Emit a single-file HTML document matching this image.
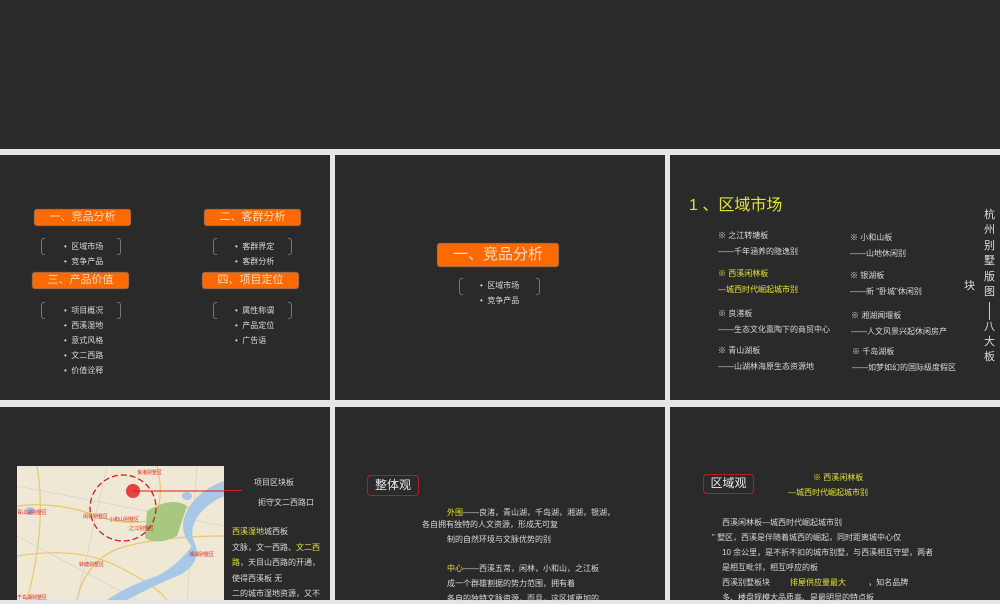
<!DOCTYPE html>
<html><head><meta charset="utf-8">
<style>
*{margin:0;padding:0;box-sizing:border-box}
body{width:1000px;height:600px;background:#e6e6e6;position:relative;overflow:hidden;font-family:"Liberation Sans","Noto Sans CJK SC",sans-serif}
.s{position:absolute;background:#2a2a2a}
.t{position:absolute;white-space:nowrap;font-size:8px;line-height:10px;color:#d8d8d8}
.y{color:#e2e234}
.ob{position:absolute;background:#ff6a00;border:1px solid #a86a40;border-radius:3px;color:#f6dcc4;text-align:center;box-shadow:0 0 1px #805030}
.br{position:absolute;width:4px;border:1px solid #777;}
.bl{border-right:none;border-radius:3px 0 0 3px}
.brr{border-left:none;border-radius:0 3px 3px 0}
.rb{position:absolute;border:1.5px solid #b02020;border-radius:4px;color:#e8e8e8;font-size:12px;text-align:center}
</style></head><body>
<div class="s" style="left:0;top:0;width:1000px;height:149px;background:#2b2b2b"></div>
<div class="s" style="left:0;top:155px;width:330px;height:245px"></div>
<div class="s" style="left:335px;top:155px;width:330px;height:245px"></div>
<div class="s" style="left:670px;top:155px;width:330px;height:245px"></div>
<div class="s" style="left:0;top:407px;width:330px;height:193px"></div>
<div class="s" style="left:335px;top:407px;width:330px;height:193px"></div>
<div class="s" style="left:670px;top:407px;width:330px;height:193px"></div>

<!-- slide 1 -->
<div class="ob" style="left:34px;top:209px;width:97px;height:17px;font-size:11px;line-height:15px">一、竞品分析</div>
<div class="ob" style="left:204px;top:209px;width:97px;height:17px;font-size:11px;line-height:15px">二、客群分析</div>
<div class="ob" style="left:32px;top:272px;width:97px;height:17px;font-size:11px;line-height:15px">三、产品价值</div>
<div class="ob" style="left:202px;top:272px;width:97px;height:17px;font-size:11px;line-height:15px">四、项目定位</div>
<div class="br bl" style="left:41px;top:238px;height:17px"></div><div class="br brr" style="left:117px;top:238px;height:17px"></div>
<div class="br bl" style="left:213px;top:238px;height:17px"></div><div class="br brr" style="left:288px;top:238px;height:17px"></div>
<div class="br bl" style="left:41px;top:302px;height:17px"></div><div class="br brr" style="left:117px;top:302px;height:17px"></div>
<div class="br bl" style="left:213px;top:302px;height:17px"></div><div class="br brr" style="left:288px;top:302px;height:17px"></div>
<div class="t" style="left:64px;top:239px;line-height:15px">•&nbsp; 区域市场<br>•&nbsp; 竞争产品</div>
<div class="t" style="left:235px;top:239px;line-height:15px">•&nbsp; 客群界定<br>•&nbsp; 客群分析</div>
<div class="t" style="left:64px;top:303px;line-height:15px">•&nbsp; 项目概况<br>•&nbsp; 西溪湿地<br>•&nbsp; 意式风格<br>•&nbsp; 文二西路<br>•&nbsp; 价值诠释</div>
<div class="t" style="left:235px;top:303px;line-height:15px">•&nbsp; 属性称谓<br>•&nbsp; 产品定位<br>•&nbsp; 广告语</div>

<!-- slide 2 -->
<div class="ob" style="left:437px;top:243px;width:122px;height:24px;font-size:15px;line-height:22px">一、竞品分析</div>
<div class="br bl" style="left:459px;top:278px;height:17px"></div><div class="br brr" style="left:536px;top:278px;height:17px"></div>
<div class="t" style="left:480px;top:278px;line-height:15px">•&nbsp; 区域市场<br>•&nbsp; 竞争产品</div>

<!-- slide 3 -->
<div class="t y" style="left:689px;top:196px;font-size:16px;line-height:20px">1 、区域市场</div>
<div class="t" style="left:718px;top:228px;line-height:16px">※ 之江转塘板<br>——千年涵养的隐逸别</div>
<div class="t y" style="left:718px;top:266px;line-height:16px">※ 西溪闲林板<br>—城西时代崛起城市别</div>
<div class="t" style="left:718px;top:306px;line-height:16px">※ 良渚板<br>——生态文化熏陶下的商贸中心</div>
<div class="t" style="left:718px;top:343px;line-height:16px">※ 青山湖板<br>——山湖林海原生态资源地</div>
<div class="t" style="left:850px;top:230px;line-height:16px">※ 小和山板<br>——山地休闲别</div>
<div class="t" style="left:850px;top:268px;line-height:16px">※ 银湖板<br>——新 "卧城"休闲别</div>
<div class="t" style="left:851px;top:308px;line-height:16px">※ 湘湖闻堰板<br>——人文风景兴起休闲房产</div>
<div class="t" style="left:852px;top:344px;line-height:16px">※ 千岛湖板<br>——如梦如幻的国际级度假区</div>
<div class="t" style="left:964px;top:279px;font-size:11px;line-height:14px;color:#ddd">块</div>
<div class="t" style="left:984px;top:208px;font-size:11px;line-height:15.4px;color:#ddd;white-space:normal;width:12px">杭州别墅版图</div>
<div style="position:absolute;left:989px;top:302px;width:1px;height:18px;background:#ccc"></div>
<div class="t" style="left:984px;top:320px;font-size:11px;line-height:15px;color:#ddd;white-space:normal;width:12px">八大板</div>

<!-- slide 4 map -->
<svg style="position:absolute;left:17px;top:466px" width="207" height="134" viewBox="0 0 207 134">
<rect width="207" height="134" fill="#efe8d4"/>
<g stroke="#e8c870" stroke-width="1.2" fill="none">
<path d="M0 40 Q40 35 80 50 T160 45 L207 30"/><path d="M20 0 Q30 60 10 134"/><path d="M60 134 Q70 90 110 80 T207 70"/><path d="M0 90 Q60 80 100 100 T150 134"/><path d="M140 0 Q150 40 130 60"/>
</g>
<g stroke="#ccc" stroke-width=".6" fill="none"><path d="M0 20 L207 60"/><path d="M0 70 L120 134"/><path d="M90 0 L60 134"/><path d="M180 0 L170 134"/></g>
<path d="M130 45 Q155 30 170 40 L160 70 Q140 80 128 72 Z" fill="#a8c880"/>
<path d="M207 15 Q180 25 170 45 Q160 65 175 80 Q160 100 140 110 Q110 120 90 134 L110 134 Q140 118 165 108 Q185 95 178 78 Q170 62 185 45 Q195 35 207 30Z" fill="#a8c8e8"/>
<ellipse cx="170" cy="30" rx="5" ry="4" fill="#a8c8e8"/><ellipse cx="13" cy="45" rx="5" ry="4" fill="#a8c8e8"/>
<circle cx="106" cy="42" r="33" fill="none" stroke="#d02020" stroke-width="1.3" stroke-dasharray="6 3"/>
<circle cx="116" cy="25" r="7" fill="#e84040"/>
<line x1="116" y1="25" x2="207" y2="25" stroke="#d02020" stroke-width="1"/>
<g fill="#e02020" font-size="5" font-family="Liberation Sans,Noto Sans CJK SC,sans-serif">
<text x="120" y="8">良渚别墅区</text><text x="0" y="48">青山湖别墅区</text><text x="66" y="52">闲林别墅区</text><text x="92" y="55">小和山别墅区</text><text x="112" y="64">之江别墅区</text><text x="172" y="90">湘湖别墅区</text><text x="62" y="100">转塘别墅区</text><text x="0" y="133">千岛湖别墅区</text></g>
</svg>
<div style="position:absolute;left:224px;top:490px;width:18px;height:1px;background:#d02020"></div>
<div class="t" style="left:254px;top:478px">项目区块板</div>
<div class="t" style="left:258px;top:498px">扼守文二西路口</div>
<div class="t" style="left:232px;top:524px;line-height:15.5px"><span class="y">西溪湿地</span>城西板<br>文脉，文一西路、<span class="y">文二西</span><br><span class="y">路</span>，天目山西路的开通，<br>使得西溪板 无<br>二的城市湿地资源，又不</div>

<!-- slide 5 -->
<div class="rb" style="left:367px;top:475px;width:52px;height:21px;line-height:18px">整体观</div>
<div class="t" style="left:447px;top:505px;line-height:15px"><span class="y">外围</span>——良渚，青山湖，千岛湖，湘湖，银湖，</div>
<div class="t" style="left:422px;top:520px">各自拥有独特的人文资源，形成无可复</div>
<div class="t" style="left:447px;top:535px">制的自然环境与文脉优势的别</div>
<div class="t" style="left:447px;top:564px"><span class="y">中心</span>——西溪五常，闲林，小和山，之江板</div>
<div class="t" style="left:447px;top:579px">成一个群雄割据的势力范围，拥有着</div>
<div class="t" style="left:447px;top:594px">各自的独特文脉资源，而且，这区域更加的</div>

<!-- slide 6 -->
<div class="rb" style="left:703px;top:474px;width:51px;height:20px;line-height:17px">区域观</div>
<div class="t y" style="left:813px;top:473px">※ 西溪闲林板</div>
<div class="t y" style="left:788px;top:488px">—城西时代崛起城市别</div>
<div class="t" style="left:722px;top:518px">西溪闲林板—城西时代崛起城市别</div>
<div class="t" style="left:712px;top:533px">" 墅区，西溪是伴随着城西的崛起，同时距离城中心仅</div>
<div class="t" style="left:722px;top:548px">10 余公里，是不折不扣的城市别墅，与西溪相互守望，两者</div>
<div class="t" style="left:722px;top:563px">是相互毗邻，相互呼应的板</div>
<div class="t" style="left:722px;top:578px">西溪别墅板块 &nbsp; &nbsp; &nbsp; &nbsp; <span class="y">排屋供应量最大</span> &nbsp; &nbsp; &nbsp; &nbsp; &nbsp;，知名品牌</div>
<div class="t" style="left:722px;top:593px">多、楼盘规模大品质高、是最明显的特点板</div>
</body></html>
